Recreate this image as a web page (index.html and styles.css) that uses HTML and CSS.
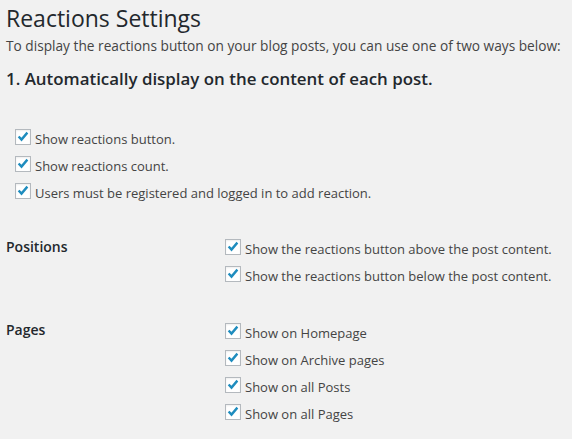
FILE: index.html
```html
<!DOCTYPE html>
<html>
<head>
<meta charset="utf-8">
<link rel="stylesheet" href="styles.css">
</head>
<body>
<div class="wrap">
  <h1 class="title">Reactions Settings</h1>
  <p class="intro">To display the reactions button on your blog posts, you can use one of two ways below:</p>
  <h2 class="section">1. Automatically display on the content of each post.</h2>

  <div class="group">
    <label class="opt"><span class="cb"><svg viewBox="0 0 16 16"><polyline points="3,7.4 6.3,11 13,3"/></svg></span>Show reactions button.</label>
    <label class="opt"><span class="cb"><svg viewBox="0 0 16 16"><polyline points="3,7.4 6.3,11 13,3"/></svg></span>Show reactions count.</label>
    <label class="opt"><span class="cb"><svg viewBox="0 0 16 16"><polyline points="3,7.4 6.3,11 13,3"/></svg></span>Users must be registered and logged in to add reaction.</label>
  </div>

  <div class="form-row">
    <div class="th">Positions</div>
    <div class="td">
      <label class="opt"><span class="cb"><svg viewBox="0 0 16 16"><polyline points="3,7.4 6.3,11 13,3"/></svg></span>Show the reactions button above the post content.</label>
      <label class="opt"><span class="cb"><svg viewBox="0 0 16 16"><polyline points="3,7.4 6.3,11 13,3"/></svg></span>Show the reactions button below the post content.</label>
    </div>
  </div>

  <div class="form-row pages">
    <div class="th">Pages</div>
    <div class="td">
      <label class="opt"><span class="cb"><svg viewBox="0 0 16 16"><polyline points="3,7.4 6.3,11 13,3"/></svg></span>Show on Homepage</label>
      <label class="opt"><span class="cb"><svg viewBox="0 0 16 16"><polyline points="3,7.4 6.3,11 13,3"/></svg></span>Show on Archive pages</label>
      <label class="opt"><span class="cb"><svg viewBox="0 0 16 16"><polyline points="3,7.4 6.3,11 13,3"/></svg></span>Show on all Posts</label>
      <label class="opt"><span class="cb"><svg viewBox="0 0 16 16"><polyline points="3,7.4 6.3,11 13,3"/></svg></span>Show on all Pages</label>
    </div>
  </div>
</div>
</body>
</html>
```
FILE: styles.css
```css
html, body {
  margin: 0;
  padding: 0;
  background: #f1f1f1;
}
body {
  font-family: "Open Sans", "Noto Sans", sans-serif;
  font-size: 13px;
  color: #444;
}
.wrap {
  padding: 4px 0 0 6px;
}
.title {
  margin: 0;
  font-size: 23px;
  font-weight: 400;
  line-height: 29px;
  color: #23282d;
}
.intro {
  margin: 3px 0 0;
  font-size: 13.7px;
  line-height: 20px;
}
.section {
  margin: 11px 0 0;
  font-size: 16.9px;
  font-weight: 600;
  line-height: 24px;
  color: #23282d;
}
.group {
  display: flex;
  flex-direction: column;
  padding: 34px 0 0 9px;
}
.opt {
  display: flex;
  align-items: center;
  height: 27px;
  line-height: 20px;
}
.cb {
  box-sizing: border-box;
  width: 16px;
  height: 16px;
  margin: -3px 4px 0 0;
  border: 1px solid #b4b9be;
  background: #fff;
  box-shadow: inset 0 1px 2px rgba(0,0,0,.07);
  flex: none;
}
.cb svg {
  display: block;
  width: 14px;
  height: 14px;
  fill: none;
  stroke: #1e8cbe;
  stroke-width: 2.7;
}
.form-row {
  display: grid;
  grid-template-columns: 219px 1fr;
  margin-top: 29px;
}
.form-row.pages {
  margin-top: 30px;
}
.th {
  font-size: 14px;
  font-weight: 600;
  color: #23282d;
  line-height: 20px;
  padding-top: 2px;
}
.pages .th {
  padding-top: 1px;
}
.td {
  display: flex;
  flex-direction: column;
}
```
